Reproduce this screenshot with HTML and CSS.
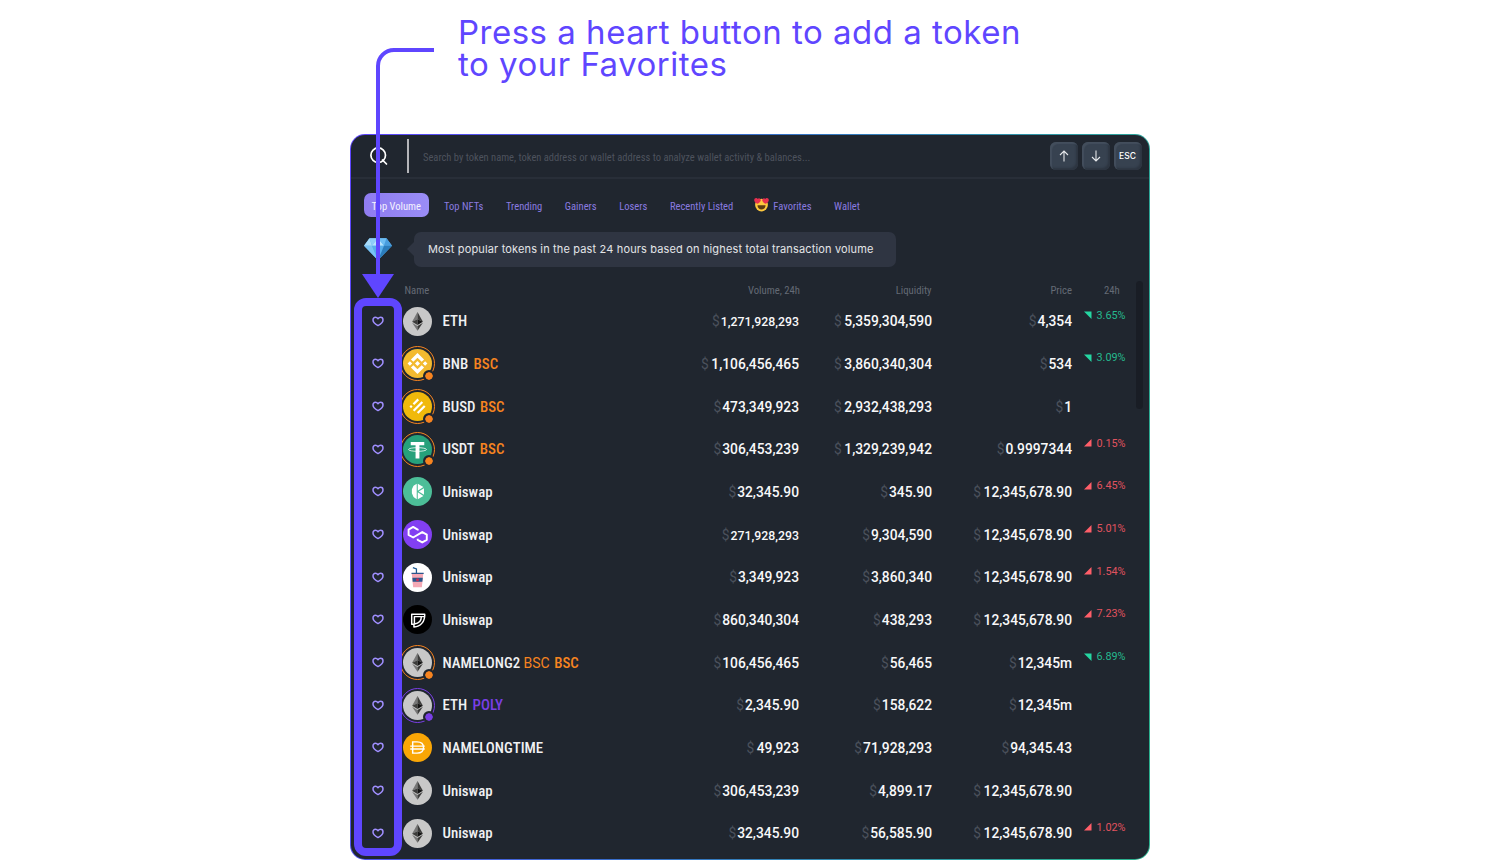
FILE: index.html
```html
<!DOCTYPE html>
<html lang="en">
<head>
<meta charset="utf-8">
<title>Token search</title>
<link rel="stylesheet" href="styles.css">
</head>
<body>
<svg class="defs" aria-hidden="true">
  <defs>
    <symbol id="heart" viewBox="0 0 12 11"><path d="M6 9.600C3.600 8.300 1 6.500 1 3.900 1 2.300 2.100 1.300 3.400 1.300 4.400 1.300 5.300 1.800 6 2.700 6.700 1.800 7.600 1.300 8.600 1.300 9.900 1.300 11 2.300 11 3.900 11 6.500 8.400 8.300 6 9.600Z" fill="none" stroke="#a08fff" stroke-width="1.500" stroke-linejoin="round"/></symbol>
    <symbol id="eth" viewBox="0 0 30 30"><circle cx="15" cy="15" r="15" fill="#c8c8c8"/><path d="M15 5.200 9.400 15.200 15 12.600z" fill="#777"/><path d="M15 5.200v7.400l5.600 2.600z" fill="#3c3c3b"/><path d="M9.400 15.200 15 12.600v5.900z" fill="#3c3c3b"/><path d="M20.600 15.200 15 12.600v5.900z" fill="#141414"/><path d="M9.400 16.400 15 24.600v-4.900z" fill="#777"/><path d="M20.600 16.400 15 24.600v-4.900z" fill="#3c3c3b"/></symbol>
    <symbol id="bnb" viewBox="0 0 30 30"><circle cx="15" cy="15" r="15" fill="#f3ba2f"/><path fill="#fff" d="m10.700 13.300 4.300-4.300 4.300 4.300 2.500-2.500L15 4.200l-6.800 6.600zM4.700 15l2.400-2.400L9.500 15l-2.400 2.400zM10.700 16.700 15 21l4.300-4.300 2.500 2.500-6.800 6.600-6.800-6.600zM20.500 15l2.400-2.400 2.400 2.400-2.400 2.400zM12.400 15l2.600-2.600 2.600 2.600-2.600 2.600z"/></symbol>
    <symbol id="busd" viewBox="0 0 30 30"><circle cx="15" cy="15" r="15" fill="#f0b90b"/><path d="m10.800 12.600 5-5M11 19.400l9-9M15.200 21.700l7.300-7.300" stroke="#fff" stroke-width="2.300"/><path d="m8.300 13.500 1.600 1.600-1.600 1.600-1.600-1.600z" fill="#fff"/></symbol>
    <symbol id="usdt" viewBox="0 0 30 30"><circle cx="15" cy="15" r="15" fill="#26a17b"/><path d="M8 7.300h14v3.400h-5v13.500h-4V10.700H8z" fill="#fff"/><ellipse cx="15" cy="15" rx="9.300" ry="1.900" fill="none" stroke="#fff" stroke-width=".8"/></symbol>
    <symbol id="kyber" viewBox="0 0 30 30"><circle cx="15" cy="15" r="15" fill="#4cbe98"/><path fill="#fff" d="M14.200 7v16l-3.300-2.200-1.700-4v-4.200l1.700-3.600zM15.300 7l5.800 3.300-5.800 4zM21.700 11.600v6.800L16.200 15zM15.300 15.700l5.800 4L15.300 23z"/></symbol>
    <symbol id="polygon" viewBox="0 0 30 30"><circle cx="15" cy="15" r="15" fill="#823ff2"/><path d="m15.200 10.800V9.900l-4.700-2.700-4.700 2.700v5.500l4.700 2.700 9.400-5.600 4.700 2.700v5.300l-4.700 2.700-4.700-2.700v-1.200" fill="none" stroke="#fff" stroke-width="2" stroke-linejoin="round"/></symbol>
    <symbol id="shake" viewBox="0 0 30 30"><circle cx="15" cy="15" r="15" fill="#fff"/><path d="m10.200 4.700 3.700 1.400V11" fill="none" stroke="#1f5a92" stroke-width="1.300"/><path d="M9 10.500h12L19.500 25h-9z" fill="#f5a9b5"/><path d="M8.800 10h12.600v1.500H8.800zM9.700 15.300h10.800l-.5 4H10z" fill="#2a568c"/><circle cx="15" cy="17.300" r="1.600" fill="#c42b55"/></symbol>
    <symbol id="dxd" viewBox="0 0 30 30"><circle cx="15" cy="15" r="15" fill="#000"/><path d="M9 9.500h13.500c.2 7.500-4 12.800-11.200 13.200V20H9zM11.800 19.700V12H19c0 4.500-2.200 7.200-7.200 7.700zM9 20h2.800M19 12h3.300" fill="none" stroke="#fff" stroke-width="1.500" stroke-linejoin="round"/></symbol>
    <symbol id="dai" viewBox="0 0 30 30"><circle cx="15" cy="15" r="15" fill="#f9a606"/><path d="M10 9.200h4.500c4.500 0 6.700 2.500 6.700 5.800s-2.200 5.800-6.700 5.800H10zM7.500 13.600h15M7.500 16.500h15" fill="none" stroke="#fff" stroke-width="1.500"/></symbol>
    <symbol id="down" viewBox="0 0 8 8"><path d="M0 .5h7.500V8z" fill="#25d6a2"/></symbol>
    <symbol id="up" viewBox="0 0 8 8"><path d="M7.500 0v7.500H0z" fill="#ff5e69"/></symbol>
  </defs>
</svg>

<h1 class="headline">Press a heart button to add a token<br>to your Favorites</h1>

<main class="panel">
  <header class="topbar">
    <svg class="search-icon" viewBox="0 0 20 20"><circle cx="9.200" cy="9.200" r="7.300"/><path d="m13.500 14 4 4"/></svg>
    <span class="divider"></span>
    <span class="placeholder">Search by token name, token address or wallet address to analyze wallet activity &amp; balances...</span>
    <span class="key"><svg viewBox="0 0 12 12"><path d="M6 11.500V1M2 5l4-4 4 4"/></svg></span>
    <span class="key"><svg viewBox="0 0 12 12"><path d="M6 .5V11M2 7l4 4 4-4"/></svg></span>
    <span class="key">ESC</span>
  </header>

  <nav class="tabs">
    <a class="tab active">Top Volume</a>
    <a class="tab">Top NFTs</a>
    <a class="tab">Trending</a>
    <a class="tab">Gainers</a>
    <a class="tab">Losers</a>
    <a class="tab">Recently Listed</a>
    <a class="tab fav"><svg class="emoji" viewBox="0 0 16 16"><circle cx="8" cy="8.600" r="6.800" fill="#ffc83d"/><path d="M3.700 8.800h8.600c0 2.800-1.800 4.500-4.300 4.500S3.700 11.600 3.700 8.800z" fill="#5c3b12"/><path d="M3.800 7.300C1.800 6.200.2 5 .2 3.100.2 1.800 1.200 1 2.300 1c.8 0 1.300.4 1.700 1 .6-.6 1.200-.8 2-.5 1.100.4 1.500 1.500 1.100 2.600C6.600 5.500 5.300 6.500 3.800 7.300zM12.200 7.300c2-1.100 3.600-2.300 3.600-4.200C15.800 1.800 14.800 1 13.700 1c-.8 0-1.300.4-1.700 1-.6-.6-1.200-.8-2-.5-1.100.4-1.500 1.500-1.100 2.600.5 1.400 1.800 2.400 3.300 3.200z" fill="#e8304f"/></svg>Favorites</a>
    <a class="tab">Wallet</a>
  </nav>

  <section class="hint">
    <svg class="gem" viewBox="0 0 28 22"><path d="M5.500 0h17L28 7.500 14 22 0 7.500z" fill="#5fb4ee"/><path d="M5.500 0 0 7.500h8z" fill="#a9dcfa"/><path d="M5.500 0 8 7.500 14 0z" fill="#8fcdf7"/><path d="M14 0 8 7.500h12z" fill="#b9e4fc"/><path d="M22.500 0H14l6 7.500z" fill="#6dbdf3"/><path d="M22.500 0 28 7.500h-8z" fill="#489dde"/><path d="M0 7.500h8L14 22z" fill="#79c2f4"/><path d="M8 7.500h12L14 22z" fill="#57aeea"/><path d="M20 7.500h8L14 22z" fill="#2b7dbd"/></svg>
    <p class="bubble">Most popular tokens in the past 24 hours based on highest total transaction volume</p>
  </section>

  <section class="table">
    <div class="row head"><span></span><span></span><span>Name</span><span>Volume, 24h</span><span>Liquidity</span><span>Price</span><span>24h</span></div>
    <div class="row"><svg class="heart"><use href="#heart"/></svg><span class="coin"><svg><use href="#eth"/></svg></span><span class="name">ETH</span><span class="num small"><i>$</i>1,271,928,293</span><span class="num"><i class="w">$</i>5,359,304,590</span><span class="num"><i>$</i>4,354</span><span class="change gain"><svg><use href="#down"/></svg>3.65%</span></div>
    <div class="row"><svg class="heart"><use href="#heart"/></svg><span class="coin ring bsc"><svg><use href="#bnb"/></svg></span><span class="name">BNB <b class="bsc">BSC</b></span><span class="num"><i class="w">$</i>1,106,456,465</span><span class="num"><i class="w">$</i>3,860,340,304</span><span class="num"><i>$</i>534</span><span class="change gain"><svg><use href="#down"/></svg>3.09%</span></div>
    <div class="row"><svg class="heart"><use href="#heart"/></svg><span class="coin ring bsc"><svg><use href="#busd"/></svg></span><span class="name">BUSD <b class="bsc tight">BSC</b></span><span class="num"><i>$</i>473,349,923</span><span class="num"><i class="w">$</i>2,932,438,293</span><span class="num"><i>$</i>1</span><span></span></div>
    <div class="row"><svg class="heart"><use href="#heart"/></svg><span class="coin ring bsc"><svg><use href="#usdt"/></svg></span><span class="name">USDT <b class="bsc">BSC</b></span><span class="num"><i>$</i>306,453,239</span><span class="num"><i class="w">$</i>1,329,239,942</span><span class="num"><i>$</i>0.9997344</span><span class="change loss"><svg><use href="#up"/></svg>0.15%</span></div>
    <div class="row"><svg class="heart"><use href="#heart"/></svg><span class="coin"><svg><use href="#kyber"/></svg></span><span class="name">Uniswap</span><span class="num"><i>$</i>32,345.90</span><span class="num"><i>$</i>345.90</span><span class="num"><i class="w">$</i>12,345,678.90</span><span class="change loss"><svg><use href="#up"/></svg>6.45%</span></div>
    <div class="row"><svg class="heart"><use href="#heart"/></svg><span class="coin"><svg><use href="#polygon"/></svg></span><span class="name">Uniswap</span><span class="num small"><i>$</i>271,928,293</span><span class="num"><i>$</i>9,304,590</span><span class="num"><i class="w">$</i>12,345,678.90</span><span class="change loss"><svg><use href="#up"/></svg>5.01%</span></div>
    <div class="row"><svg class="heart"><use href="#heart"/></svg><span class="coin"><svg><use href="#shake"/></svg></span><span class="name">Uniswap</span><span class="num"><i>$</i>3,349,923</span><span class="num"><i>$</i>3,860,340</span><span class="num"><i class="w">$</i>12,345,678.90</span><span class="change loss"><svg><use href="#up"/></svg>1.54%</span></div>
    <div class="row"><svg class="heart"><use href="#heart"/></svg><span class="coin"><svg><use href="#dxd"/></svg></span><span class="name">Uniswap</span><span class="num"><i>$</i>860,340,304</span><span class="num"><i>$</i>438,293</span><span class="num"><i class="w">$</i>12,345,678.90</span><span class="change loss"><svg><use href="#up"/></svg>7.23%</span></div>
    <div class="row"><svg class="heart"><use href="#heart"/></svg><span class="coin ring bsc"><svg><use href="#eth"/></svg></span><span class="name">NAMELONG2 <b class="bsc big">BSC</b> <b class="bsc tight">BSC</b></span><span class="num"><i>$</i>106,456,465</span><span class="num"><i>$</i>56,465</span><span class="num"><i>$</i>12,345m</span><span class="change gain"><svg><use href="#down"/></svg>6.89%</span></div>
    <div class="row"><svg class="heart"><use href="#heart"/></svg><span class="coin ring poly"><svg><use href="#eth"/></svg></span><span class="name">ETH <b class="poly">POLY</b></span><span class="num"><i>$</i>2,345.90</span><span class="num"><i>$</i>158,622</span><span class="num"><i>$</i>12,345m</span><span></span></div>
    <div class="row"><svg class="heart"><use href="#heart"/></svg><span class="coin"><svg><use href="#dai"/></svg></span><span class="name">NAMELONGTIME</span><span class="num"><i class="w">$</i>49,923</span><span class="num"><i>$</i>71,928,293</span><span class="num"><i>$</i>94,345.43</span><span></span></div>
    <div class="row"><svg class="heart"><use href="#heart"/></svg><span class="coin"><svg><use href="#eth"/></svg></span><span class="name">Uniswap</span><span class="num"><i>$</i>306,453,239</span><span class="num"><i>$</i>4,899.17</span><span class="num"><i class="w">$</i>12,345,678.90</span><span></span></div>
    <div class="row"><svg class="heart"><use href="#heart"/></svg><span class="coin"><svg><use href="#eth"/></svg></span><span class="name">Uniswap</span><span class="num"><i>$</i>32,345.90</span><span class="num"><i>$</i>56,585.90</span><span class="num"><i class="w">$</i>12,345,678.90</span><span class="change loss"><svg><use href="#up"/></svg>1.02%</span></div>
    <span class="scrollbar"></span>
  </section>
</main>

<svg class="callout" viewBox="0 0 90 860"><path d="M84 50H44a16 16 0 0 0-16 16V278" fill="none" stroke="#5f46ff" stroke-width="4"/><path d="M12 274h32L28 298z" fill="#5f46ff"/><rect x="8" y="302" width="40" height="550" rx="8" fill="none" stroke="#5f46ff" stroke-width="8"/></svg>
</body>
</html>
```
FILE: styles.css
```css
* { box-sizing: border-box; }
body { margin: 0; height: 860px; overflow: hidden; position: relative; background: #fff; font-family: Roboto, "Liberation Sans", sans-serif; }
.defs { position: absolute; width: 0; height: 0; }

.headline { margin: 0; height: 134px; padding: 16px 0 0 458px; font: 400 33px/32px Inter, sans-serif; letter-spacing: .5px; color: #5f46ff; }
.callout { position: absolute; left: 350px; top: 0; width: 90px; height: 860px; }

.panel {
  width: 800px; height: 725.5px; margin: 0 auto; border: 1px solid transparent; border-radius: 15px; overflow: hidden;
  background: linear-gradient(#20262f, #20262f) padding-box, linear-gradient(100deg, #5f46ff, #3670c8 45%, #2bb08f 95%) border-box;
}

.topbar { display: flex; align-items: center; height: 44px; padding: 1px 7.5px 1px 18px; border-bottom: 2px solid #282e38; }
.search-icon { width: 20px; height: 20px; fill: none; stroke: #fff; stroke-width: 1.7; stroke-linecap: round; }
.divider { width: 1.5px; height: 34px; margin: 0 14.5px 0 18px; background: #b4b5b9; }
.placeholder { flex: 1; padding-top: 3px; font-size: 10.5px; font-stretch: 75%; color: #4d525d; white-space: nowrap; }
.key {
  display: flex; align-items: center; justify-content: center; width: 28px; height: 28px; margin-left: 4px; border-radius: 6px;
  background: #374250; box-shadow: inset 2px 2px 1px #434e5c, inset -2px -2px 2px #2d3541; color: #fff; font: 500 8.5px Inter, sans-serif;
}
.key svg { width: 12px; height: 12px; fill: none; stroke: #e5e7ea; stroke-width: 1.1; }

.tabs { display: flex; align-items: center; gap: 22.6px; padding: 13.5px 0 0 13px; }
.tab { display: flex; align-items: center; height: 24.5px; padding-top: 3px; font-size: 10.55px; font-stretch: 75%; color: #8a7be0; white-space: nowrap; }
.tab.active { justify-content: center; width: 64.5px; margin-right: -7px; border-radius: 7px; background: linear-gradient(90deg, #8f7cf0, #9a8df6); color: #f4f2ff; }
.emoji { width: 15px; height: 15px; margin: -4px 4px 0 -1.5px; }

.hint { display: flex; align-items: center; gap: 21.5px; padding: 15px 0 0 13px; }
.gem { width: 28px; height: 22.5px; margin-top: -1px; }
.bubble { position: relative; margin: 0; width: 482px; height: 35px; padding-left: 14.5px; border-radius: 7px; background: #2f3542; font: 400 11px/34px Inter, sans-serif; letter-spacing: .15px; color: #e4e5e8; white-space: nowrap; }
.bubble::before { content: ""; position: absolute; left: -7px; top: 10px; border: solid transparent; border-width: 7.5px 7px 7.5px 0; border-right-color: #2f3542; }

.table { position: relative; padding-top: 14.3px; }
.row { display: grid; grid-template-columns: 47px 31px 250px 116px 133px 140px 77px; align-items: center; height: 42.667px; padding-left: 4px; }
.head { height: 18.667px; font-size: 10.7px; font-stretch: 75%; color: #646a75; }
.head span:nth-child(3) { margin-left: -28.5px; }
.head span:nth-child(n+4) { text-align: right; }
.head span:nth-child(4) { margin-right: -1px; }
.head span:nth-child(5) { margin-right: .5px; }
.head span:last-child { padding-left: 32px; text-align: left; }
.heart { width: 12px; height: 11px; margin-left: 17.4px; }
.coin { position: relative; width: 29px; height: 29px; margin-left: 1px; }
.coin svg { display: block; width: 29px; height: 29px; }
.ring::before { content: ""; position: absolute; inset: -3px; border: 1.5px solid currentColor; border-radius: 50%; }
.ring::after { content: ""; position: absolute; left: 20px; top: 20.5px; width: 12px; height: 12px; border-radius: 50%; background: radial-gradient(circle, currentColor 3.4px, #20262f 4px); }
.bsc { color: #f78420; }
.poly { color: #7a3fe6; }
.name { padding-left: 9.5px; font-size: 14.9px; font-weight: 500; font-stretch: 75%; color: #f0f1f3; white-space: nowrap; }
.name b { margin-left: 2px; font-weight: 500; }
.name b.tight { margin-left: 1px; }
.name b.big { margin-left: 0; font-size: 14px; font-weight: 400; font-stretch: 100%; }
.num { text-align: right; font-size: 13.8px; font-weight: 500; color: #f8f8f9; white-space: nowrap; }
.num.small { font-size: 12.3px; }
.num i { margin-right: 1px; font-size: 13.8px; font-style: normal; font-weight: 400; color: #4b515c; }
.num i.w { margin-right: 2.5px; }
.change { display: flex; align-items: center; gap: 4.5px; padding: 0 0 12px 12px; font-size: 10.8px; }
.change svg { width: 8px; height: 8px; }
.gain { color: #25b98e; }
.loss { color: #e0535f; }
.scrollbar { position: absolute; right: 6px; top: 14px; width: 7.5px; height: 128px; border-radius: 4px; background: #191d25; }
```
